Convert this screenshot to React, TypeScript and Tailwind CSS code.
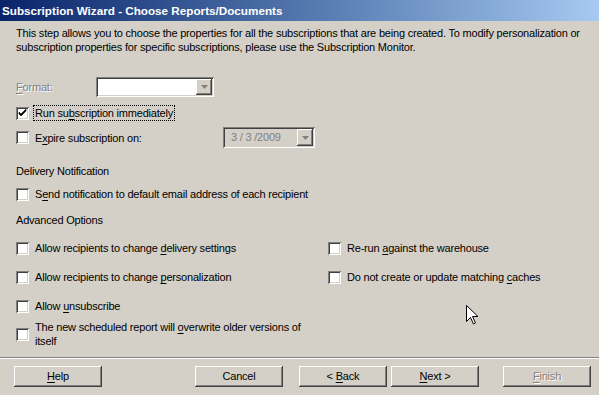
import type { ReactNode } from "react";

const sunken =
  "shadow-[inset_1px_1px_#808080,inset_-1px_-1px_#ffffff,inset_2px_2px_#404040,inset_-2px_-2px_#d4d0c8]";
const raised =
  "shadow-[inset_-1px_-1px_#404040,inset_1px_1px_#ffffff,inset_-2px_-2px_#808080,inset_2px_2px_#d4d0c8]";
const disabledText = "text-[#808080] [text-shadow:1px_1px_0_#ffffff]";

function U({ children }: { children: ReactNode }) {
  return <span className="underline underline-offset-[2px]">{children}</span>;
}

function Box({ checked = false }: { checked?: boolean }) {
  return (
    <span className={`relative block size-[13px] shrink-0 bg-white ${sunken}`}>
      {checked ? (
        <svg viewBox="0 0 13 13" className="absolute inset-0 size-[13px]">
          <path d="M3 5v2l2 2l5-5v-2l-5 5z" fill="#000" stroke="#000" strokeWidth="0.6" />
        </svg>
      ) : null}
    </span>
  );
}

function Check({
  children,
  checked,
  focused
}: {
  children: ReactNode;
  checked?: boolean;
  focused?: boolean;
}) {
  return (
    <div className="flex h-4 items-center">
      <Box checked={checked} />
      <span
        className={
          focused
            ? "ml-[4px] border border-dotted border-black px-[1px] leading-[14px]"
            : "ml-[6px] leading-[14px]"
        }
      >
        {children}
      </span>
    </div>
  );
}

function Arrow({ disabled }: { disabled?: boolean }) {
  return (
    <span className={`flex w-4 shrink-0 items-center justify-center bg-[#d4d0c8] ${raised}`}>
      <svg viewBox="0 0 7 4" className="h-[4px] w-[7px]">
        <path d="M0 0h7l-3.5 4z" fill={disabled ? "#808080" : "#000"} />
      </svg>
    </span>
  );
}

function Button({ children, disabled }: { children: ReactNode; disabled?: boolean }) {
  return (
    <div
      className={`flex h-[21px] w-[88px] items-center justify-center bg-[#d4d0c8] ${raised} ${
        disabled ? disabledText : "text-black"
      }`}
    >
      <span>{children}</span>
    </div>
  );
}

export default function App() {
  return (
    <div className="relative h-[395px] w-[599px] overflow-hidden bg-[#d4d0c8] font-['Liberation_Sans',Arial,sans-serif] text-[11px] tracking-[-0.2px] text-black">
      <div className="flex h-[21px] items-center bg-gradient-to-r from-[#0a246a] to-[#a6caf0] pl-[2px] text-[11.7px] font-bold tracking-normal text-white">
        Subscription Wizard - Choose Reports/Documents
      </div>

      <div className="px-4">
        <p className="mt-[5px] leading-[14px]">
          This step allows you to choose the properties for all the subscriptions that are being
          created. To modify personalization or subscription properties for specific subscriptions,
          please use the Subscription Monitor.
        </p>

        <div className="mt-[23px] flex h-[20px] items-center">
          <span className={`w-[80px] ${disabledText}`}>
            <U>F</U>ormat:
          </span>
          <div className={`flex h-[20px] w-[118px] bg-white p-[2px] ${sunken}`}>
            <span className="flex-1" />
            <Arrow disabled />
          </div>
        </div>

        <div className="mt-[8px]">
          <Check checked focused>
            Run su<U>b</U>scription immediately
          </Check>
        </div>

        <div className="mt-[6px] flex h-[21px] items-center">
          <div className="w-[207px]">
            <Check>
              E<U>x</U>pire subscription on:
            </Check>
          </div>
          <div className={`flex h-[21px] w-[92px] bg-[#d4d0c8] p-[2px] ${sunken}`}>
            <span className="flex-1 pl-[6px] leading-[17px] text-[#808080]">3 / 3 /2009</span>
            <Arrow disabled />
          </div>
        </div>

        <div className="mt-[16px] h-[14px] leading-[14px]">Delivery Notification</div>

        <div className="mt-[8px]">
          <Check>
            S<U>e</U>nd notification to default email address of each recipient
          </Check>
        </div>

        <div className="mt-[11px] h-[14px] leading-[14px]">Advanced Options</div>

        <div className="mt-[13px] grid grid-cols-[312px_1fr] gap-y-[13px]">
          <Check>
            Allow recipients to change <U>d</U>elivery settings
          </Check>
          <Check>
            Re-run <U>a</U>gainst the warehouse
          </Check>
          <Check>
            Allow recipients to change <U>p</U>ersonalization
          </Check>
          <Check>
            Do not create or update matching <U>c</U>aches
          </Check>
        </div>

        <div className="mt-[13px]">
          <Check>
            Allow <U>u</U>nsubscribe
          </Check>
        </div>

        <div className="mt-[6px] flex h-[28px] items-center">
          <Box />
          <span className="ml-[6px] w-[280px] leading-[14px]">
            The new scheduled report will <U>o</U>verwrite older versions of itself
          </span>
        </div>
      </div>

      <div className="mt-[9px] h-[2px] border-t border-b border-t-[#808080] border-b-white" />

      <div className="mt-[7px] flex pl-[14px]">
        <Button>
          <U>H</U>elp
        </Button>
        <div className="ml-[93px]">
          <Button>Cancel</Button>
        </div>
        <div className="ml-[16px]">
          <Button>
            &lt; <U>B</U>ack
          </Button>
        </div>
        <div className="ml-[4px]">
          <Button>
            <U>N</U>ext &gt;
          </Button>
        </div>
        <div className="ml-[24px]">
          <Button disabled>
            <U>F</U>inish
          </Button>
        </div>
      </div>

      <svg
        viewBox="0 0 12 20"
        className="absolute left-[466px] top-[305px] h-[20px] w-[12px]"
      >
        <path
          d="M0.5 0.5v16l4-4l3 6.5l2-1l-3-6.5h5.5z"
          fill="#ffffff"
          stroke="#000000"
          strokeWidth="1"
        />
      </svg>
    </div>
  );
}
